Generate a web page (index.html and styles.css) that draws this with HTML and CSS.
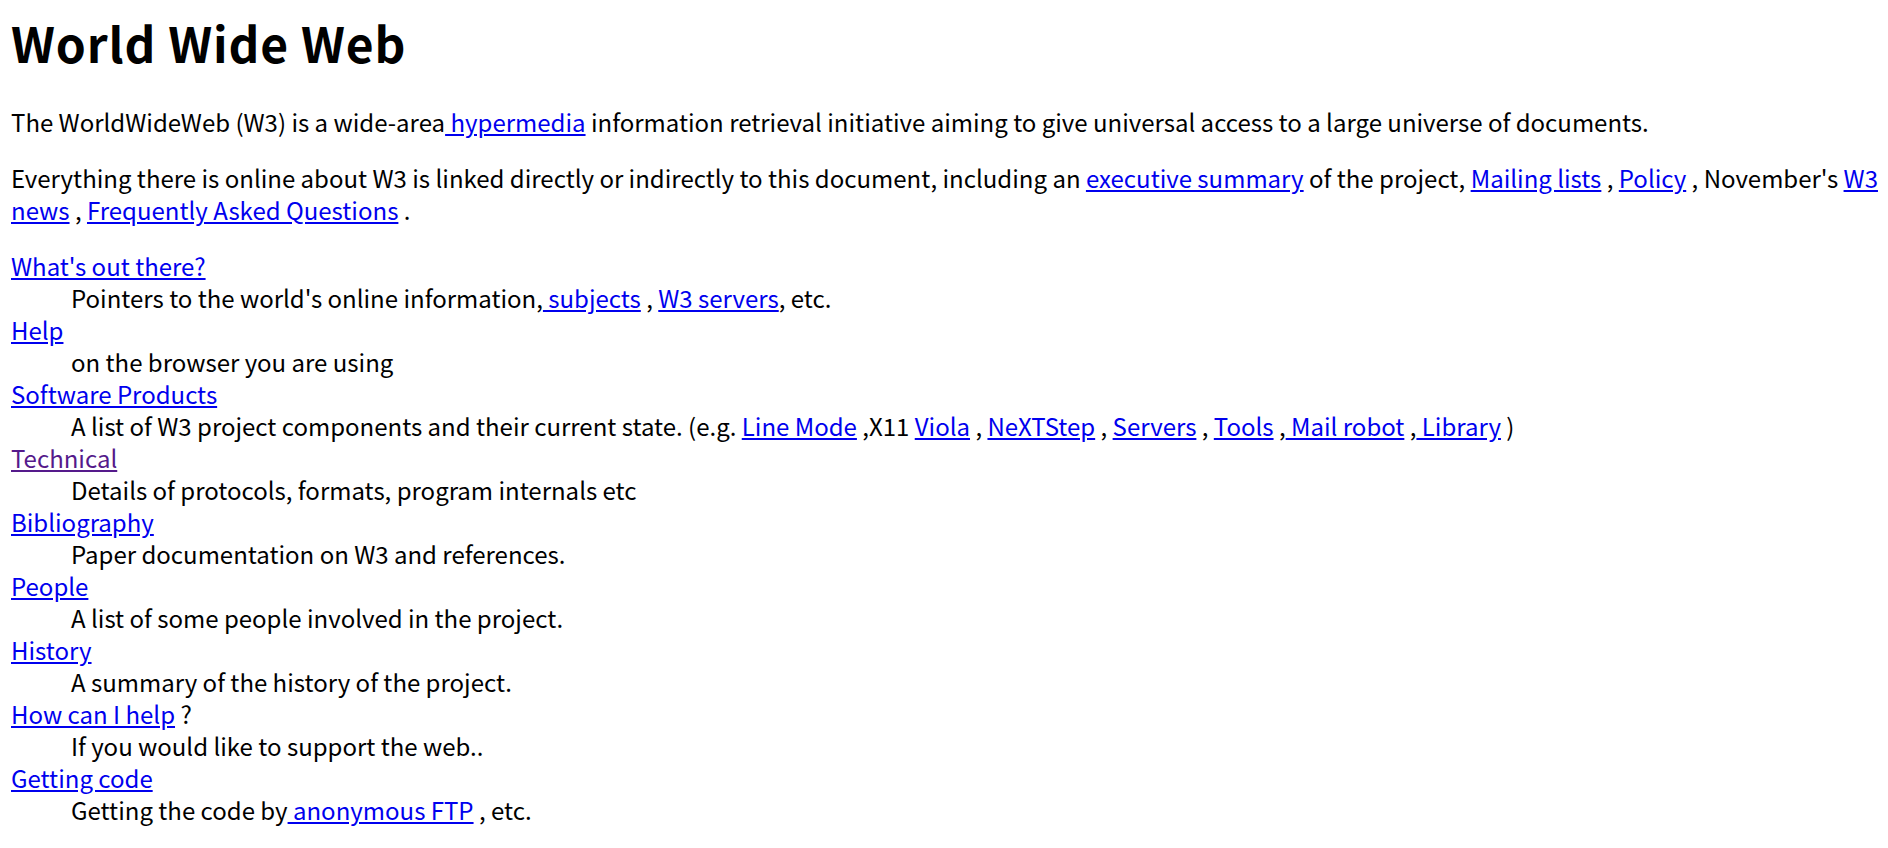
FILE: index.html
```html
<!DOCTYPE html>
<html>
<head>
<meta charset="utf-8">
<title>The World Wide Web project</title>
<link rel="stylesheet" href="styles.css">
</head>
<body class="page">
<h1 class="title">World Wide Web</h1>
<p class="para">The WorldWideWeb (W3) is a wide-area<a class="link" href="#"> hypermedia</a> information retrieval initiative aiming to give universal access to a large universe of documents.</p>
<p class="para">Everything there is online about W3 is linked directly or indirectly to this document, including an <a class="link" href="#">executive summary</a> of the project, <a class="link" href="#">Mailing lists</a> , <a class="link" href="#">Policy</a> , November's <a class="link" href="#">W3 news</a> , <a class="link" href="#">Frequently Asked Questions</a> .</p>
<dl class="list">
<dt class="term"><a class="link" href="#">What's out there?</a></dt>
<dd class="desc">Pointers to the world's online information,<a class="link" href="#"> subjects</a> , <a class="link" href="#">W3 servers</a>, etc.</dd>
<dt class="term"><a class="link" href="#">Help</a></dt>
<dd class="desc">on the browser you are using</dd>
<dt class="term"><a class="link" href="#">Software Products</a></dt>
<dd class="desc">A list of W3 project components and their current state. (e.g. <a class="link" href="#">Line Mode</a> ,X11 <a class="link" href="#">Viola</a> , <a class="link" href="#">NeXTStep</a> , <a class="link" href="#">Servers</a> , <a class="link" href="#">Tools</a> ,<a class="link" href="#"> Mail robot</a> ,<a class="link" href="#"> Library</a> )</dd>
<dt class="term"><a class="link visited" href="#">Technical</a></dt>
<dd class="desc">Details of protocols, formats, program internals etc</dd>
<dt class="term"><a class="link" href="#">Bibliography</a></dt>
<dd class="desc">Paper documentation on W3 and references.</dd>
<dt class="term"><a class="link" href="#">People</a></dt>
<dd class="desc">A list of some people involved in the project.</dd>
<dt class="term"><a class="link" href="#">History</a></dt>
<dd class="desc">A summary of the history of the project.</dd>
<dt class="term"><a class="link" href="#">How can I help</a> ?</dt>
<dd class="desc">If you would like to support the web..</dd>
<dt class="term"><a class="link" href="#">Getting code</a></dt>
<dd class="desc">Getting the code by<a class="link" href="#"> anonymous FTP</a> , etc.</dd>
</dl>
</body>
</html>
```

FILE: styles.css
```css
html, body { background: #fff; }
.page {
  margin: 10px 10px 10px 11px;
  font-family: "Noto Sans CJK KR", "Noto Sans", sans-serif;
  font-size: 24px;
  line-height: 32px;
  color: #000;
}
.title {
  font-size: 48px;
  line-height: 64px;
  font-weight: bold;
  letter-spacing: 0.9px;
  margin: 0 0 32px 0;
}
.para { margin: 24px 0; }
.list { margin: 24px 0; }
.term { margin: 0; }
.desc { margin: 0 0 0 60px; }
.link { color: #0000ee; text-decoration: underline; }
.link.visited { color: #551a8b; }
```
